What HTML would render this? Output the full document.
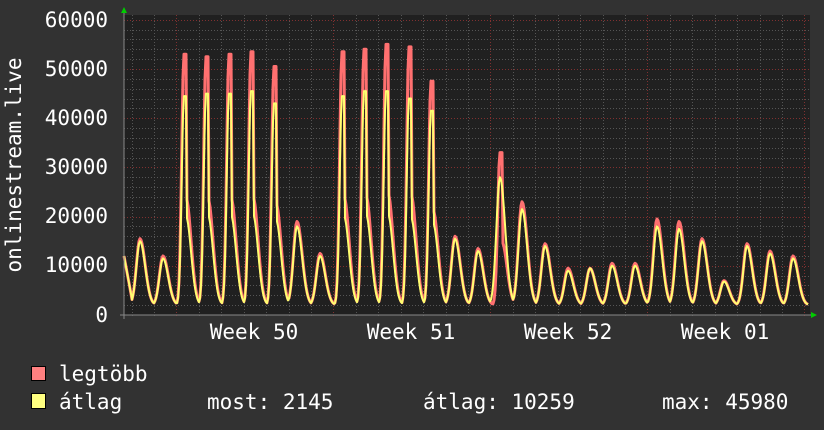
<!DOCTYPE html>
<html><head><meta charset="utf-8"><style>
html,body{margin:0;padding:0;background:#323232;}
svg{display:block}
text{font-family:"DejaVu Sans Mono","Liberation Mono",monospace;font-size:21px;fill:#fff}
</style></head><body>
<svg id="s" width="824" height="430" xmlns="http://www.w3.org/2000/svg">
<rect width="824" height="430" fill="#323232"/>
<rect x="124" y="15" width="686" height="300" fill="#202020"/>
<g id="grid"></g>
<g id="data"></g>
<line x1="120" y1="315" x2="814" y2="315" stroke="#888" stroke-width="1"/>
<line x1="124" y1="12" x2="124" y2="319" stroke="#888" stroke-width="1"/>
<polygon points="121,13 127,13 124,7" fill="#0c0"/>
<polygon points="811,312 811,318 817,315" fill="#0c0"/>
<g text-anchor="end">
<text x="108" y="27">60000</text>
<text x="108" y="76">50000</text>
<text x="108" y="125">40000</text>
<text x="108" y="174">30000</text>
<text x="108" y="223">20000</text>
<text x="108" y="272">10000</text>
<text x="108" y="322">0</text>
</g>
<g text-anchor="middle">
<text x="254" y="339">Week 50</text>
<text x="411" y="339">Week 51</text>
<text x="568" y="339">Week 52</text>
<text x="725" y="339">Week 01</text>
</g>
<text transform="translate(21,165) rotate(-90)" text-anchor="middle">onlinestream.live</text>
<rect x="31.5" y="366.5" width="14" height="14" fill="#ff8080" stroke="#000" stroke-width="1"/>
<rect x="31.5" y="393.5" width="14" height="15" fill="#ffff80" stroke="#000" stroke-width="1"/>
<text x="59" y="381">legtöbb</text>
<text x="59" y="409">átlag</text>
<text x="207" y="409">most: 2145</text>
<text x="423" y="409">átlag: 10259</text>
<text x="662" y="409">max: 45980</text>
</svg>
<script>
var ns="http://www.w3.org/2000/svg";
function el(p,t,a){var e=document.createElementNS(ns,t);for(var k in a)e.setAttribute(k,a[k]);p.appendChild(e);return e;}
var g=document.getElementById("grid");
function Y(v){return 315-v*0.00492;}
for(var v=2000;v<=60000;v+=2000){var y=Math.round(Y(v))+0.5;
 if(v%10000==0)el(g,"line",{x1:124,x2:810,y1:y,y2:y,stroke:"#803030","stroke-dasharray":"1,2"});
 else el(g,"line",{x1:124,x2:810,y1:y,y2:y,stroke:"#555","stroke-dasharray":"1,2"});}
for(var i=0;i<32;i++){var x=Math.round(131.5+i*22.43)+0.5;if(x>810)break;
 var major=((i-2)%7==0);
 el(g,"line",{x1:x,x2:x,y1:15,y2:318,stroke:major?"#803030":"#555","stroke-dasharray":"1,2"});}
var P=[[140,15500,15000],[163,12000,11500],[184,53000,44500],[206,52500,45000],[229,53000,45000],[251,53500,45500],[274,50500,43000],[297,19000,18000],[320,12500,12000],[342,53500,44500],[364,54000,45500],[386,55000,45500],[409,54500,44000],[431,47500,41500],[455,16000,15500],[478,13500,13000],[500,33000,28000],[522,23000,21500],[545,14500,14000],[568,9500,9000],[590,9500,9500],[612,10500,10000],[635,10500,10000],[657,19500,18000],[679,19000,17500],[702,15500,15000],[724,7000,6800],[747,14500,14000],[770,13000,12500],[793,12000,11500]];
function val(x,idx){var best=2000;
 for(var j=0;j<P.length;j++){var d=x-P[j][0];var pk=P[j][idx];var big=pk>30000;var w;
  if(big){
   if(d<0)w=2000+(pk-2000)*Math.exp(-d*d/(2*2.3*2.3));
   else if(d<=2)w=pk;
   else w=2000+(pk*0.45-2000)*Math.exp(-(d-2)*(d-2)/(2*5*5));
  } else {
   var s=d<0?3.6:5.2;
   w=2000+(pk-2000)*Math.exp(-d*d/(2*s*s));
  }
  if(w>best)best=w;}
 if(x<132)best=Math.max(best,12000-(x-124)*1100);
 return best;}
var d=document.getElementById("data");
function line(idx,col,wd){var pts=[];for(var x=124;x<=808;x++){pts.push(x+","+Y(val(x,idx)).toFixed(1));}
 el(d,"polyline",{points:pts.join(" "),fill:"none",stroke:col,"stroke-width":wd,"stroke-linejoin":"round"});}
line(1,"#ff7070",3);
line(2,"#ffff70",2);
</script>
</body></html>
